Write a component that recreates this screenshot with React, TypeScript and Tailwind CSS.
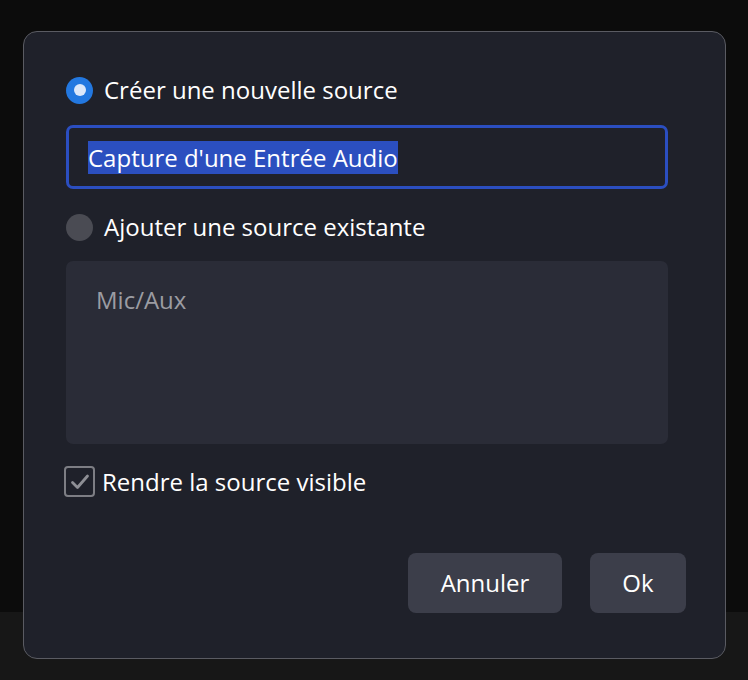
import React from "react";

function Radio({ checked }: { checked: boolean }) {
  return checked ? (
    <span className="flex h-[27px] w-[27px] shrink-0 items-center justify-center rounded-full bg-[#2378e0]">
      <span className="h-[12px] w-[12px] rounded-full bg-[#dde8fa]" />
    </span>
  ) : (
    <span className="h-[27px] w-[27px] shrink-0 rounded-full bg-[#4a4b53]" />
  );
}

export default function App() {
  return (
    <div
      className="h-[680px] w-[748px] overflow-hidden bg-[linear-gradient(to_bottom,#0c0c0c_612px,#171717_612px)] pl-[23px] pt-[31px] text-white"
      style={{ fontFamily: '"Open Sans", "Noto Sans", sans-serif' }}
    >
      <div className="flex h-[628px] w-[703px] flex-col rounded-[14px] border border-[#5a5b62] bg-[#1f212a] pb-[45px] pl-[42px] pr-[57px] pt-[44px]">
        <label className="flex h-[28px] items-center gap-[11px] text-[24px] leading-[28px]">
          <Radio checked />
          <span>Créer une nouvelle source</span>
        </label>

        <div className="mt-[21px] flex h-[64px] items-center rounded-[7px] border-[3px] border-[#2b4ec0] pl-[19px]">
          <span className="bg-[#2b4fbf] text-[24px] leading-[33px] text-white">Capture d'une Entrée Audio</span>
        </div>

        <label className="mt-[24px] flex h-[28px] items-center gap-[11px] text-[24px] leading-[28px]">
          <Radio checked={false} />
          <span>Ajouter une source existante</span>
        </label>

        <div className="mt-[20px] h-[183px] rounded-[7px] bg-[#2a2c37] px-[30px] pt-[24px]">
          <span className="text-[24px] leading-[30px] text-[#9b9ca2]">Mic/Aux</span>
        </div>

        <label className="ml-[-2px] mt-[22px] flex h-[31px] items-center gap-[7px] text-[24px] leading-[31px]">
          <span className="flex h-[31px] w-[31px] items-center justify-center rounded-[4px] border-2 border-[#7d7e84]">
            <svg width="22" height="22" viewBox="0 0 22 22" fill="none">
              <path d="M3.5 11.5 L8.5 16.5 L18.5 5" stroke="#8e8f95" strokeWidth="2.8" strokeLinecap="round" strokeLinejoin="round" />
            </svg>
          </span>
          <span>Rendre la source visible</span>
        </label>

        <div className="mt-auto flex justify-end">
          <div className="mr-[-18px] flex gap-[28px]">
            <button className="h-[60px] w-[154px] rounded-[8px] bg-[#3c3e4a] text-[24px] text-white">Annuler</button>
            <button className="h-[60px] w-[96px] rounded-[8px] bg-[#3c3e4a] text-[24px] text-white">Ok</button>
          </div>
        </div>
      </div>
    </div>
  );
}
